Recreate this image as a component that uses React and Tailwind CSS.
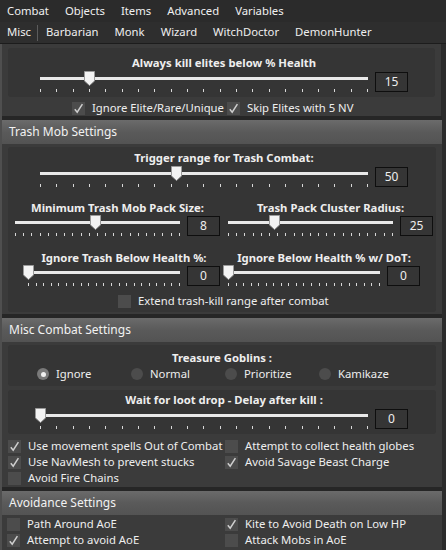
import React from 'react';

const MENU = ['Combat', 'Objects', 'Items', 'Advanced', 'Variables'];
const TABS = ['Barbarian', 'Monk', 'Wizard', 'WitchDoctor', 'DemonHunter'];

function Box({ checked }) {
  return (
    <span className="w-[13px] h-[13px] shrink-0 bg-[#4c4c4c] flex items-center justify-center">
      {checked && (
        <svg width="11" height="11" viewBox="0 0 11 11">
          <path d="M1.8 6.2 L4.2 9.2 L9.4 1.2" fill="none" stroke="#cfcfcf" strokeWidth="1.5" />
        </svg>
      )}
    </span>
  );
}

function Check({ checked, label, className = '' }) {
  return (
    <div className={`flex items-center gap-[7px] h-[16px] ${className}`}>
      <Box checked={checked} />
      <span className="whitespace-nowrap leading-[16px]">{label}</span>
    </div>
  );
}

function Radio({ on, label }) {
  return (
    <div className="w-[94px] flex items-center gap-[7px] h-[16px]">
      <span className={`w-[12px] h-[12px] rounded-full flex items-center justify-center ${on ? 'bg-[#7a7a7a]' : 'bg-[#4c4c4c]'}`}>
        {on && <span className="w-[5px] h-[5px] rounded-full bg-[#f0f0f0]" />}
      </span>
      <span className="leading-[16px]">{label}</span>
    </div>
  );
}

function Ticks() {
  return (
    <div className="absolute left-0 right-0 top-[18px] flex justify-between">
      {Array.from({ length: 21 }).map((_, i) => (
        <span key={i} className="w-px h-[3px] bg-[#d8d8d8]" />
      ))}
    </div>
  );
}

// slider group: centered bold label above track + value box
function Slider({ label, pos, value, className = '', labelClass = 'leading-[16px]' }) {
  return (
    <div className={`flex flex-col ${className}`}>
      <div className={`text-center font-bold whitespace-nowrap ${labelClass}`}>{label}</div>
      <div className="flex items-start">
        <div className="relative flex-1 h-[23px]">
          <div className="absolute left-0 right-0 top-[6px] h-[3px] bg-[#e9e9e9]" />
          <Ticks />
          <svg
            className="absolute top-0"
            style={{ left: `calc(${pos * 100}% - 5.5px)` }}
            width="11"
            height="15"
            viewBox="0 0 11 15"
          >
            <polygon points="0.5,0.5 10.5,0.5 10.5,10 5.5,14.5 0.5,10" fill="#f3f3f3" stroke="#9a9a9a" />
          </svg>
        </div>
        <div className="ml-[7px] mt-[1px] w-[33px] h-[20px] border border-[#0e0e0e] flex items-center justify-center text-[12px]">
          {value}
        </div>
      </div>
    </div>
  );
}

function Header({ children }) {
  return (
    <div className="h-[24px] flex items-center px-[7px] bg-linear-to-b from-[#6b6b6b] via-[#5a5a5a] to-[#535353] text-[12px] text-[#f2f2f2]">
      {children}
    </div>
  );
}

export default function App() {
  return (
    <div className="w-[446px] h-[550px] overflow-hidden bg-[#2b2b2b] text-[#eeeeee] text-[11.3px] font-['Noto_Sans',sans-serif] flex flex-col">
      {/* Menu */}
      <div className="h-[22px] flex items-center text-[11.3px] text-[#f0f0f0]">
        {MENU.map((m) => (
          <span key={m} className="px-[8px] first:pl-[7px]">{m}</span>
        ))}
      </div>

      {/* Tabs */}
      <div className="h-[22px] flex items-center text-[11.3px] bg-[#2e2e2e] border-b border-[#1c1c1c]">
        <span className="pl-[7px] pr-[6px]">Misc</span>
        <span className="w-px h-[16px] bg-[#5c5c5c]" />
        {TABS.map((t) => (
          <span key={t} className="px-[8px] first:pl-[9px]">{t}</span>
        ))}
      </div>

      <div className="flex-1 flex min-h-0">
        <div className="w-[2px] bg-[#4f4f4f]" />
        <div className="flex-1 flex flex-col gap-[4px] mr-[4px] bg-[#262626]">
          {/* Elites (scrolled) */}
          <div className="bg-[#3b3b3b] h-[76px] px-[6px] pt-[4px] border-r border-[#2a2a2a]">
            <div className="bg-[#353535] rounded-[3px] pt-[7px] pb-[3px]">
              <Slider className="ml-[32px] w-[368px]" label="Always kill elites below % Health" pos={0.15} value="15" />
            </div>
            <div className="flex items-center mt-[3px] pl-[64px]">
              <Check checked label="Ignore Elite/Rare/Unique" />
              <Check checked label="Skip Elites with 5 NV" className="ml-[3px]" />
            </div>
          </div>

          {/* Trash */}
          <div className="flex flex-col">
            <Header>Trash Mob Settings</Header>
            <div className="bg-[#3b3b3b] h-[170px] px-[6px] pt-[3px]">
              <div className="bg-[#353535] rounded-[3px] h-[165px] pt-[3px] flex flex-col">
                <Slider className="ml-[32px] w-[368px]" label="Trigger range for Trash Combat:" pos={0.415} value="50" />
                <div className="flex gap-[8px] mt-[12px] ml-[7px]">
                  <Slider className="w-[205px]" labelClass="leading-[14px]" label="Minimum Trash Mob Pack Size:" pos={0.49} value="8" />
                  <Slider className="w-[205px]" labelClass="leading-[14px]" label="Trash Pack Cluster Radius:" pos={0.28} value="25" />
                </div>
                <div className="flex gap-[8px] mt-[13px] ml-[20px]">
                  <Slider className="w-[192px]" labelClass="leading-[14px]" label="Ignore Trash Below Health %:" pos={0} value="0" />
                  <Slider className="w-[192px]" labelClass="leading-[14px]" label="Ignore Below Health % w/ DoT:" pos={0} value="0" />
                </div>
                <Check label="Extend trash-kill range after combat" className="mt-[5px] ml-[110px]" />
              </div>
            </div>
          </div>

          {/* Misc */}
          <div className="flex flex-col">
            <Header>Misc Combat Settings</Header>
            <div className="bg-[#3b3b3b] h-[145px] px-[6px] pt-[3px] flex flex-col">
              <div className="bg-[#353535] rounded-[3px] h-[41px] pt-[5px] flex flex-col">
                <div className="text-center font-bold leading-[16px]">Treasure Goblins :</div>
                <div className="flex ml-[29px]">
                  <Radio on label="Ignore" />
                  <Radio label="Normal" />
                  <Radio label="Prioritize" />
                  <Radio label="Kamikaze" />
                </div>
              </div>
              <div className="bg-[#353535] rounded-[3px] mt-[4px] pt-[2px] pb-[3px]">
                <Slider className="ml-[32px] w-[368px]" label="Wait for loot drop - Delay after kill :" pos={0} value="0" />
              </div>
              <div className="grid grid-cols-[217px_1fr] mt-[4px]">
                <Check checked label="Use movement spells Out of Combat" />
                <Check label="Attempt to collect health globes" />
                <Check checked label="Use NavMesh to prevent stucks" />
                <Check checked label="Avoid Savage Beast Charge" />
                <Check label="Avoid Fire Chains" />
              </div>
            </div>
          </div>

          {/* Avoidance */}
          <div className="flex flex-col">
            <Header>Avoidance Settings</Header>
            <div className="bg-[#3b3b3b] h-[40px] px-[5px] pt-[1px] grid grid-cols-[218px_1fr] content-start">
              <Check label="Path Around AoE" />
              <Check checked label="Kite to Avoid Death on Low HP" />
              <Check checked label="Attempt to avoid AoE" />
              <Check label="Attack Mobs in AoE" />
            </div>
          </div>
        </div>
      </div>
    </div>
  );
}
